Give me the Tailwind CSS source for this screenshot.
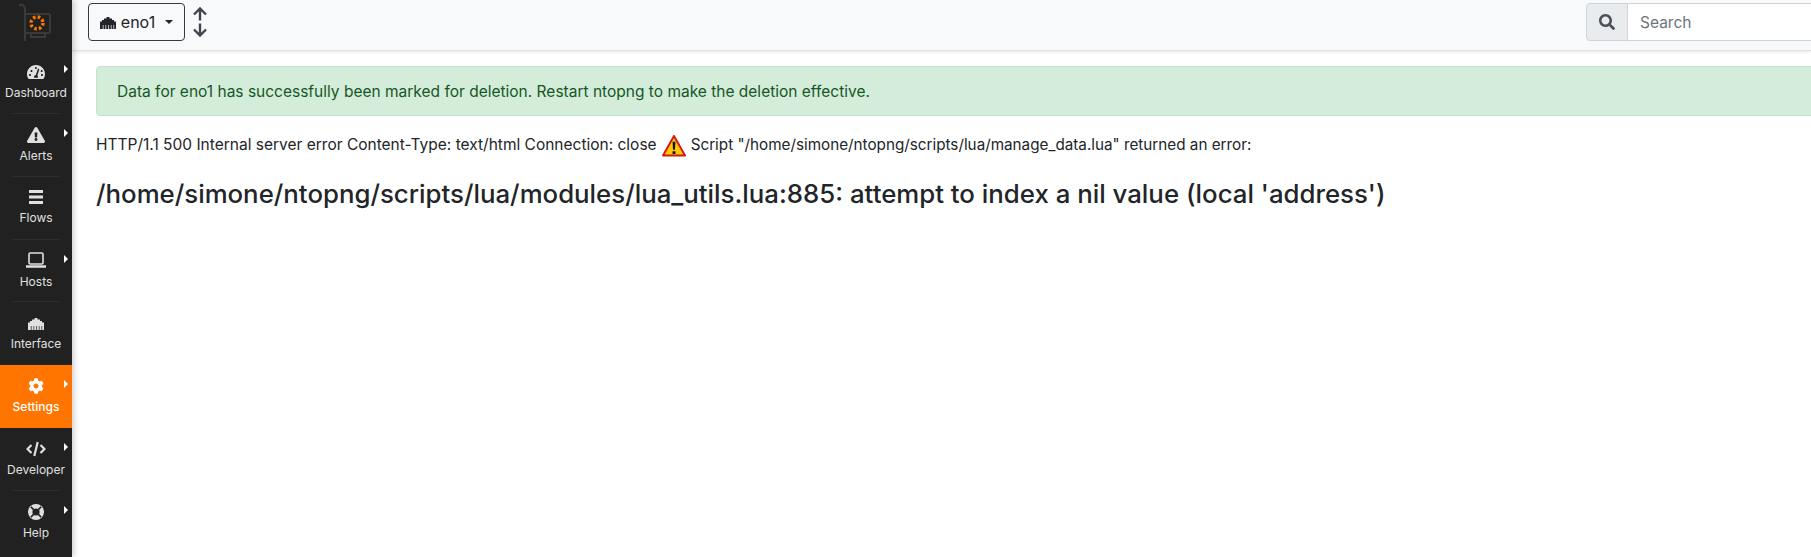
<!DOCTYPE html>
<html lang="en">
<head>
    <meta charset="UTF-8">
    <title>ntopng</title>
    <script src="https://cdn.jsdelivr.net/npm/@tailwindcss/browser@4"></script>
</head>
<body class="bg-white h-[557px] w-[1811px] overflow-hidden flex font-['Inter',sans-serif] text-[#212529]">
    <!-- sidebar -->
    <nav class="w-[72px] h-full bg-[#212121] shrink-0 flex flex-col shadow-[2px_0_6px_rgba(0,0,0,0.2)] z-10">
        <div class="h-[50px] flex items-center justify-center">
            <svg class="mt-[-2px]" width="38" height="40" viewBox="0 0 38 40" fill="none">
                <path d="M2 1h4l2 3v33" stroke="#3a3a3a" stroke-width="2"/>
                <path d="M8 10h23a2 2 0 0 1 2 2v15a2 2 0 0 1-2 2H8M14 29v4h14v-4" stroke="#3a3a3a" stroke-width="2"/>
                <circle cx="20" cy="19" r="6" stroke="#ff7500" stroke-width="3.4" stroke-dasharray="2.6 2.1"/>
            </svg>
        </div>
        <a class="relative h-[64px] flex flex-col items-center pt-[14px] text-[#e0e0e0] text-[12px] leading-[18px]">
            <svg class="h-[16px] w-[18px] mb-[4px]" viewBox="0 0 576 512" fill="#e0e0e0"><path fill-rule="evenodd" d="M288 32C129 32 0 161 0 320c0 53 14 102 39 145 6 10 17 15 28 15h442c11 0 22-5 28-15 25-43 39-92 39-145C576 161 447 32 288 32zm0 64c15 0 27 11 31 25-2 3-3 6-4 9l-9 28c-5 2-11 2-18 2-18 0-32-14-32-32s14-32 32-32zM96 384c-18 0-32-14-32-32s14-32 32-32 32 14 32 32-14 32-32 32zm48-128c-18 0-32-14-32-32s14-32 32-32 32 14 32 32-14 32-32 32zm247-73-61 185c14 10 22 26 22 44 0 11-3 21-9 30H233c-6-9-9-19-9-30 0-33 26-61 59-64l61-184c4-13 18-20 31-15 12 4 20 18 16 34zm78 9c18 0 32 14 32 32s-14 32-32 32-34-16-30-34l12-30c5 0 12 0 18 0zm11 192c-18 0-32-14-32-32s14-32 32-32 32 14 32 32-14 32-32 32z"/></svg>
            <span>Dashboard</span>
            <span class="absolute top-[15px] right-[4px] border-l-[4px] border-y-[4px] border-y-transparent border-l-white"></span>
            <span class="absolute bottom-0 left-[12px] right-[12px] h-px bg-[#2e2e2e]"></span>
        </a>
        <a class="relative h-[63px] flex flex-col items-center pt-[13px] text-[#e0e0e0] text-[12px] leading-[18px]">
            <svg class="h-[16px] w-[18px] mb-[4px]" viewBox="0 0 576 512" fill="#e0e0e0"><path fill-rule="evenodd" d="M569.5 440 329.500 24c-18.400-32-64.700-32-83.200 0L6.500 440c-18.400 31.900 4.600 72 41.600 72h479.900c36.800 0 60-40 41.500-72zM288 354c25.400 0 46 20.600 46 46s-20.600 46-46 46-46-20.600-46-46 20.600-46 46-46zm-43.700-165.300 7.400 136c.3 6.400 5.600 11.300 12 11.300h48.500c6.400 0 11.600-5 12-11.300l7.400-136c.4-6.900-5.100-12.700-12-12.700h-63.400c-6.900 0-12.400 5.800-12 12.700z"/></svg>
            <span>Alerts</span>
            <span class="absolute top-[15px] right-[4px] border-l-[4px] border-y-[4px] border-y-transparent border-l-white"></span>
            <span class="absolute bottom-0 left-[12px] right-[12px] h-px bg-[#2e2e2e]"></span>
        </a>
        <a class="relative h-[63px] flex flex-col items-center pt-[12px] text-[#e0e0e0] text-[12px] leading-[18px]">
            <svg class="h-[16px] w-[16px] mb-[4px]" viewBox="0 0 16 16" fill="#e0e0e0"><rect y="1" x="1" width="14" height="3"/><rect y="6.500" x="1" width="14" height="3"/><rect y="12" x="1" width="14" height="3"/></svg>
            <span>Flows</span>
            <span class="absolute bottom-0 left-[12px] right-[12px] h-px bg-[#2e2e2e]"></span>
        </a>
        <a class="relative h-[62px] flex flex-col items-center pt-[12px] text-[#e0e0e0] text-[12px] leading-[18px]">
            <svg class="h-[17px] w-[20px] mb-[4px]" viewBox="0 0 20 17" fill="none" stroke="#e0e0e0"><rect x="3" y="1" width="14" height="11" rx="1.200" stroke-width="1.600"/><path d="M0.500 14.500h19" stroke-width="2.400" stroke-linecap="round"/></svg>
            <span>Hosts</span>
            <span class="absolute top-[15px] right-[4px] border-l-[4px] border-y-[4px] border-y-transparent border-l-white"></span>
            <span class="absolute bottom-0 left-[12px] right-[12px] h-px bg-[#2e2e2e]"></span>
        </a>
        <a class="relative h-[63px] flex flex-col items-center pt-[15px] text-[#e0e0e0] text-[12px] leading-[18px]">
            <svg class="h-[13px] w-[16px] mb-[5px]" viewBox="0 0 16 13" fill="#e0e0e0"><path d="M0 13V5.500h2V4h2V2.500h2.500V1h3v1.500H12V4h2v1.500h2V13h-1.800V9h-.7v4h-2V9h-.7v4H8.700V9h-.7v4h-1.800V9h-.7v4h-2V9h-.7v4z"/></svg>
            <span>Interface</span>
        </a>
        <a class="relative h-[63px] flex flex-col items-center pt-[13px] bg-[#ff7500] text-white font-medium text-[12px] leading-[18px]">
            <svg class="h-[16px] w-[16px] mb-[4px]" viewBox="0 0 512 512" fill="#fff"><path fill-rule="evenodd" d="m487 316-42-25c4-23 4-47 0-70l42-25c5-3 7-9 5-14-11-35-29-66-54-92-4-4-10-5-14-2l-42 24c-18-15-38-27-60-35V29c0-6-4-11-9-12-36-8-73-8-108 0-5 1-9 6-9 12v48c-22 8-42 20-60 35L94 88c-5-3-10-2-14 2-25 26-43 57-54 92-2 5 0 11 5 14l42 25c-4 23-4 47 0 70l-42 25c-5 3-7 9-5 14 11 35 29 66 54 92 4 4 10 5 14 2l42-24c18 15 38 27 60 35v48c0 6 4 11 9 12 36 8 73 8 108 0 5-1 9-6 9-12v-48c22-8 42-20 60-35l42 24c5 3 10 2 14-2 25-26 43-57 54-92 2-5 0-11-5-14zM256 336c-44 0-80-36-80-80s36-80 80-80 80 36 80 80-36 80-80 80z"/></svg>
            <span>Settings</span>
            <span class="absolute top-[15px] right-[4px] border-l-[4px] border-y-[4px] border-y-transparent border-l-white"></span>
        </a>
        <a class="relative h-[63px] flex flex-col items-center pt-[13px] text-[#e0e0e0] text-[12px] leading-[18px]">
            <svg class="h-[16px] w-[20px] mb-[4px]" viewBox="0 0 20 16" fill="none" stroke="#e0e0e0" stroke-width="2.200"><path d="M5.500 4 1.500 8l4 4M14.500 4l4 4-4 4"/><path d="M11.700 1 8.300 15"/></svg>
            <span>Developer</span>
            <span class="absolute top-[15px] right-[4px] border-l-[4px] border-y-[4px] border-y-transparent border-l-white"></span>
            <span class="absolute bottom-0 left-[12px] right-[12px] h-px bg-[#2e2e2e]"></span>
        </a>
        <a class="relative h-[63px] flex flex-col items-center pt-[13px] text-[#e0e0e0] text-[12px] leading-[18px]">
            <svg class="h-[16px] w-[16px] mb-[4px]" viewBox="0 0 16 16"><circle cx="8" cy="8" r="8" fill="#e0e0e0"/><circle cx="8" cy="8" r="3.600" fill="#212121"/><path d="m2.800 2.800 2.800 2.800M13.200 2.800l-2.800 2.800M2.800 13.200l2.800-2.800M13.200 13.200l-2.800-2.800" stroke="#212121" stroke-width="1.600"/></svg>
            <span>Help</span>
            <span class="absolute top-[15px] right-[4px] border-l-[4px] border-y-[4px] border-y-transparent border-l-white"></span>
        </a>
    </nav>

    <div class="flex-1 min-w-0 flex flex-col">
        <!-- top bar -->
        <header class="h-[51px] shrink-0 bg-[#f8f9fa] border-b border-[#dee2e6] shadow-[0_1px_3px_rgba(0,0,0,0.1)] flex items-center pl-[16px]">
            <button class="h-[38px] w-[97px] mb-[6px] border border-[#343a40] rounded-[4px] flex items-center justify-center gap-[5px] text-[16px] text-[#212529]">
                <svg class="w-[16px] h-[13px]" viewBox="0 0 16 13" fill="#212529"><path d="M0 13V5.500h2V4h2V2.500h2.500V1h3v1.500H12V4h2v1.500h2V13h-1.800V9h-.7v4h-2V9h-.7v4H8.700V9h-.7v4h-1.800V9h-.7v4h-2V9h-.7v4z"/></svg>
                <span>eno1</span>
                <span class="ml-[5px] border-t-[4px] border-x-[4px] border-x-transparent border-t-[#212529]"></span>
            </button>
            <svg class="ml-[8px] mb-[6px] w-[14px] h-[30px]" viewBox="0 0 14 30" fill="none" stroke="#3f4450" stroke-width="2.400"><path d="M7 1.500v12M1 7.500l6-6 6 6M7 16.500v12M1 22.500l6 6 6-6"/></svg>
            <div class="ml-auto mr-[-35px] mb-[6px] flex h-[38px] w-[260px] shrink-0">
                <span class="w-[42px] flex items-center justify-center bg-[#e9ecef] border border-[#ced4da] rounded-l-[4px]">
                    <svg class="w-[16px] h-[16px]" viewBox="0 0 512 512" fill="#495057"><path fill-rule="evenodd" d="M505 443 405 343c-4-4-10-7-17-7h-16c28-35 44-80 44-128C416 93 323 0 208 0S0 93 0 208s93 208 208 208c48 0 93-16 128-44v16c0 7 3 13 7 17l100 100c9 9 24 9 34 0l28-28c9-10 9-25 0-34zM208 336c-71 0-128-57-128-128S137 80 208 80s128 57 128 128-57 128-128 128z"/></svg>
                </span>
                <input placeholder="Search" class="flex-1 min-w-0 bg-white border border-l-0 border-[#ced4da] px-[12px] pt-[2px] text-[15.5px] placeholder:text-[#6c757d]">
            </div>
        </header>

        <!-- content -->
        <main class="pl-[24px] pt-[15px]">
            <div class="h-[50px] w-[1800px] flex items-center pl-[20px] pt-[2px] bg-[#d4edda] border border-[#c3e6cb] rounded-[4px] text-[#155724] text-[15.5px]">
                Data for eno1 has successfully been marked for deletion. Restart ntopng to make the deletion effective.
            </div>
            <p class="mt-[17px] h-[24px] flex items-center whitespace-nowrap text-[15.5px]">
                <span>HTTP/1.1 500 Internal server error Content-Type: text/html Connection: close</span>
                <svg class="mx-[4px] w-[26px] h-[23px]" viewBox="0 0 26 24"><path d="M13 2 24.500 22.500h-23z" fill="#ffc800" stroke="#d01818" stroke-width="2" stroke-linejoin="round"/><path d="M11.500 8h3l-.5 8.500h-2zM11.500 18h3v2.800h-3z" fill="#111"/></svg>
                <span class="text-[15.25px]">Script "/home/simone/ntopng/scripts/lua/manage_data.lua" returned an error:</span>
            </p>
            <h2 class="mt-[21px] whitespace-nowrap text-[25.8px] leading-[31px] font-medium">/home/simone/ntopng/scripts/lua/modules/lua_utils.lua:885: attempt to index a nil value (local 'address')</h2>
        </main>
    </div>
</body>
</html>
